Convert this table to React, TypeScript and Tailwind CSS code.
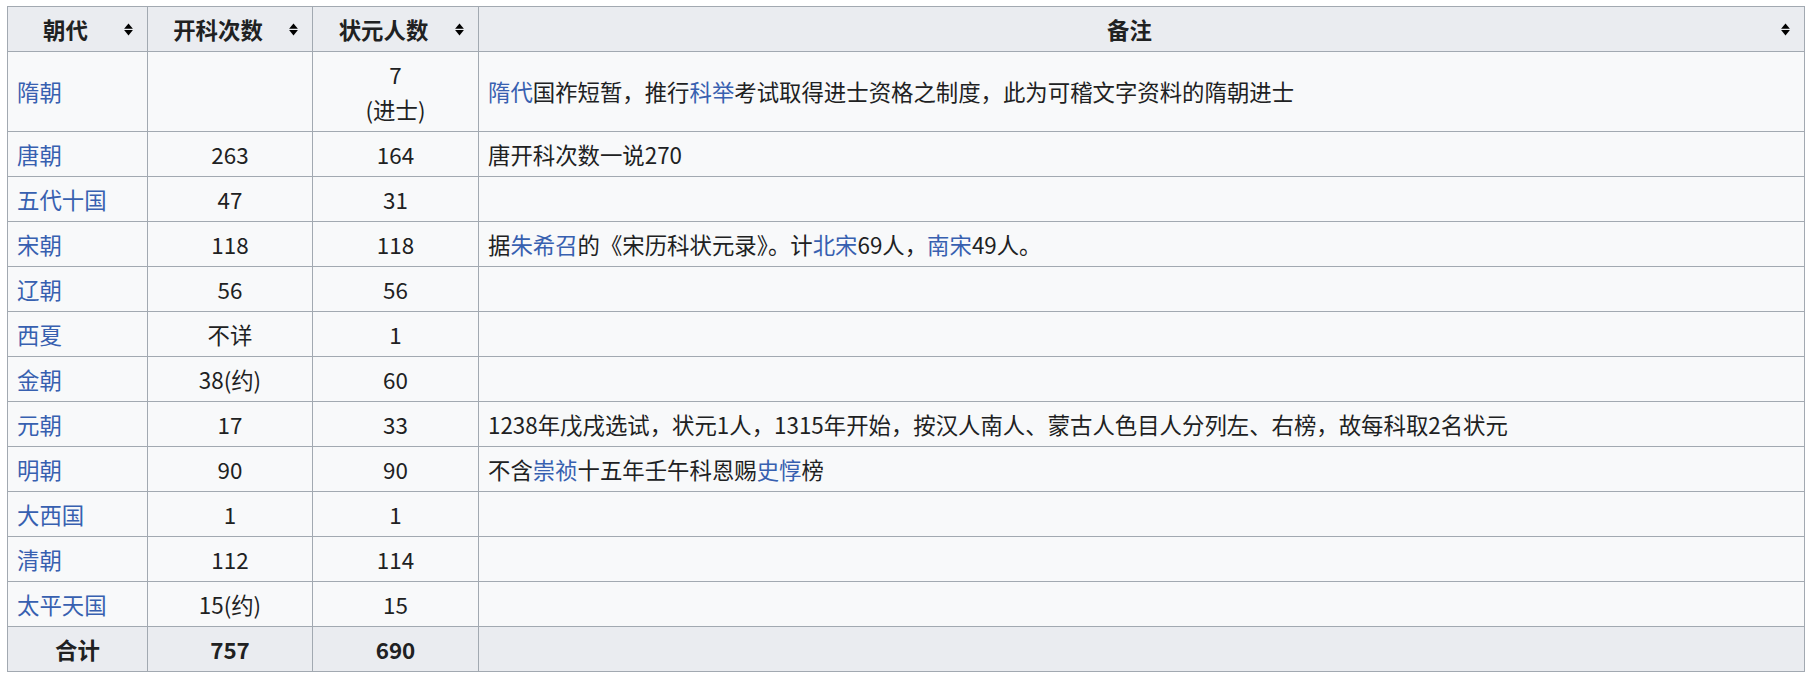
type Part = string | { link: string };

type Row = {
  name: string;
  exams: string;
  winners: string[];
  note: Part[];
};

const rows: Row[] = [
  {
    name: "隋朝",
    exams: "",
    winners: ["7", "(进士)"],
    note: [
      { link: "隋代" },
      "国祚短暂，推行",
      { link: "科举" },
      "考试取得进士资格之制度，此为可稽文字资料的隋朝进士",
    ],
  },
  { name: "唐朝", exams: "263", winners: ["164"], note: ["唐开科次数一说270"] },
  { name: "五代十国", exams: "47", winners: ["31"], note: [] },
  {
    name: "宋朝",
    exams: "118",
    winners: ["118"],
    note: [
      "据",
      { link: "朱希召" },
      "的《宋历科状元录》。计",
      { link: "北宋" },
      "69人，",
      { link: "南宋" },
      "49人。",
    ],
  },
  { name: "辽朝", exams: "56", winners: ["56"], note: [] },
  { name: "西夏", exams: "不详", winners: ["1"], note: [] },
  { name: "金朝", exams: "38(约)", winners: ["60"], note: [] },
  {
    name: "元朝",
    exams: "17",
    winners: ["33"],
    note: [
      "1238年戊戌选试，状元1人，1315年开始，按汉人南人、蒙古人色目人分列左、右榜，故每科取2名状元",
    ],
  },
  {
    name: "明朝",
    exams: "90",
    winners: ["90"],
    note: ["不含", { link: "崇祯" }, "十五年壬午科恩赐", { link: "史惇" }, "榜"],
  },
  { name: "大西国", exams: "1", winners: ["1"], note: [] },
  { name: "清朝", exams: "112", winners: ["114"], note: [] },
  { name: "太平天国", exams: "15(约)", winners: ["15"], note: [] },
];

function SortIcon() {
  return (
    <svg width="9" height="13" viewBox="0 0 9 13" className="shrink-0">
      <path d="M4.5 0.5 L8.9 5.7 L0.1 5.7 Z" fill="#000" />
      <path d="M0.1 7.1 L8.9 7.1 L4.5 12.4 Z" fill="#000" />
    </svg>
  );
}

function HeadCell({ label }: { label: string }) {
  return (
    <th className="border border-[#a2a9b1] bg-[#eaecf0] py-[4.5px] pl-[9px] pr-[14px] font-bold">
      <div className="flex items-center">
        <span className="flex-1 text-center">{label}</span>
        <span className="ml-[10px] flex">
          <SortIcon />
        </span>
      </div>
    </th>
  );
}

function Note({ parts }: { parts: Part[] }) {
  return (
    <>
      {parts.map((p, i) =>
        typeof p === "string" ? (
          <span key={i}>{p}</span>
        ) : (
          <span key={i} className="text-[#3760b0]">
            {p.link}
          </span>
        )
      )}
    </>
  );
}

const cell = "border border-[#a2a9b1] px-[9px] py-[4.5px]";

export default function App() {
  return (
    <div className="min-h-screen bg-white pl-[7px] pt-[6px]">
      <table
        className="w-[1798px] table-fixed border-collapse bg-[#f8f9fa] text-[22.4px] leading-[35px] text-[#202122]"
        style={{ fontFamily: '"Noto Sans CJK SC", sans-serif' }}
      >
        <colgroup>
          <col className="w-[140px]" />
          <col className="w-[165px]" />
          <col className="w-[166px]" />
          <col />
        </colgroup>
        <thead>
          <tr>
            <HeadCell label="朝代" />
            <HeadCell label="开科次数" />
            <HeadCell label="状元人数" />
            <HeadCell label="备注" />
          </tr>
        </thead>
        <tbody>
          {rows.map(r => (
            <tr key={r.name}>
              <td className={`${cell} text-left text-[#3760b0]`}>{r.name}</td>
              <td className={`${cell} text-center`}>{r.exams}</td>
              <td className={`${cell} text-center`}>
                {r.winners.map((w, i) => (
                  <div key={i}>{w}</div>
                ))}
              </td>
              <td className={`${cell} text-left`}>
                <Note parts={r.note} />
              </td>
            </tr>
          ))}
          <tr className="bg-[#eaecf0] font-bold">
            <td className={`${cell} text-center`}>合计</td>
            <td className={`${cell} text-center`}>757</td>
            <td className={`${cell} text-center`}>690</td>
            <td className={cell}></td>
          </tr>
        </tbody>
      </table>
    </div>
  );
}
